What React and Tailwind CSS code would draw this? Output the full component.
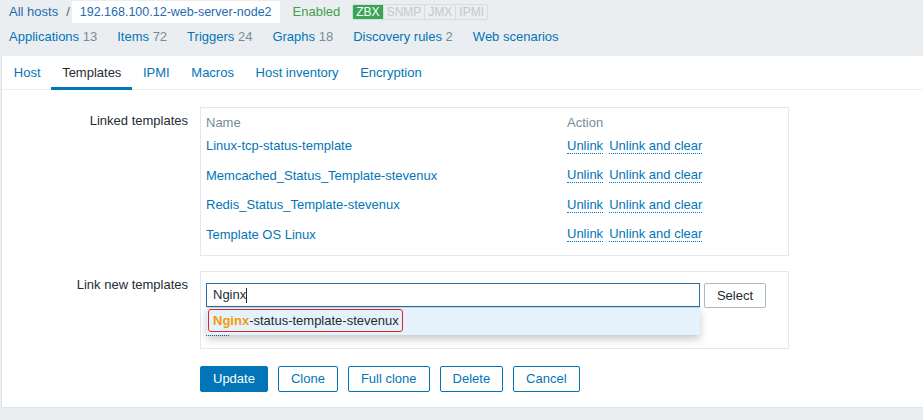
import React from "react";

const font = { fontFamily: '"Liberation Sans", Arial, sans-serif' };

const counts = [
  ["Applications", "13"],
  ["Items", "72"],
  ["Triggers", "24"],
  ["Graphs", "18"],
  ["Discovery rules", "2"],
  ["Web scenarios", ""],
];

const tabs = ["Host", "Templates", "IPMI", "Macros", "Host inventory", "Encryption"];

const linked = [
  "Linux-tcp-status-template",
  "Memcached_Status_Template-stevenux",
  "Redis_Status_Template-stevenux",
  "Template OS Linux",
];

function Btn({ children, primary }) {
  return (
    <button
      className={
        primary
          ? "h-[26px] px-[12px] rounded-[2px] border border-[#0275b8] bg-[#0275b8] text-white"
          : "h-[26px] px-[12px] rounded-[2px] border border-[#0275b8] bg-white text-[#0275b8]"
      }
    >
      {children}
    </button>
  );
}

export default function App() {
  return (
    <div style={font} className="w-[923px] h-[420px] bg-[#ebeef0] text-[13px] text-[#1f2c33] overflow-hidden">
      {/* breadcrumbs */}
      <div className="flex items-center h-[24px] pl-[9px]">
        <span className="text-[#1f6bb0]">All hosts</span>
        <span className="ml-[8px] text-[#4f5f68]">/</span>
        <span className="ml-[2px] h-[22px] flex items-center px-[8px] bg-white text-[12.5px] text-[#1f6bb0]">
          192.168.100.12-web-server-node2
        </span>
        <span className="ml-[13px] text-[#429e47]">Enabled</span>
        <div className="ml-[12px] flex h-[16px] text-[12px] leading-[14px] rounded-[2px] overflow-hidden border border-[#d8dcdf]">
          <span className="px-[3px] bg-[#3aa458] text-white">ZBX</span>
          <span className="px-[3px] text-[#c3c9cd] border-l border-[#d8dcdf]">SNMP</span>
          <span className="px-[3px] text-[#c3c9cd] border-l border-[#d8dcdf]">JMX</span>
          <span className="px-[3px] text-[#c3c9cd] border-l border-[#d8dcdf]">IPMI</span>
        </div>
      </div>

      {/* host counters */}
      <div className="flex items-center h-[26px] pl-[9px] gap-x-[20px] mb-[6px]">
        {counts.map(([label, n]) => (
          <span key={label}>
            <span className="text-[#0275b8]">{label}</span>
            {n && <span className="text-[#768d99]"> {n}</span>}
          </span>
        ))}
      </div>

      {/* main panel */}
      <div className="ml-[1px] bg-white border-l border-b border-[#dfe4e7] h-[352px]">
        <div className="flex h-[34px] pl-[1px] border-b border-[#ebeef0]">
          {tabs.map((t) => (
            <div key={t} className="relative flex items-center px-[10.8px]">
              <span className={t === "Templates" ? "text-[#1f2c33]" : "text-[#0275b8]"}>{t}</span>
              {t === "Templates" && (
                <div className="absolute left-0 right-0 bottom-[-1px] h-[3px] bg-[#0275b8]" />
              )}
            </div>
          ))}
        </div>

        <div className="pt-[17px]">
          {/* linked templates */}
          <div className="flex">
            <div className="w-[186px] text-right pt-[5px] leading-[17px]">Linked templates</div>
            <div className="ml-[12px] w-[589px] border border-[#e5e9eb] px-[5px] pt-[6px] pb-[6px]">
              <div className="grid grid-cols-[361px_1fr] h-[17px] leading-[17px] text-[#768d99]">
                <span>Name</span>
                <span>Action</span>
              </div>
              {linked.map((name) => (
                <div key={name} className="grid grid-cols-[361px_1fr] h-[29.5px] items-center">
                  <span className="text-[#0275b8]">{name}</span>
                  <span className="flex gap-[6px] text-[#0275b8] leading-[15px]">
                    <span className="border-b border-dotted border-[#0275b8]">Unlink</span>
                    <span className="border-b border-dotted border-[#0275b8]">Unlink and clear</span>
                  </span>
                </div>
              ))}
            </div>
          </div>

          {/* link new templates */}
          <div className="flex mt-[15px]">
            <div className="w-[186px] text-right pt-[5px] leading-[17px]">Link new templates</div>
            <div className="ml-[12px] w-[589px] border border-[#e5e9eb] pl-[5px] pt-[11px] pb-[12px]">
              <div className="flex items-start">
                <div className="relative w-[494px] h-[24px] border border-[#2a6eaa] flex items-center pl-[6px]">
                  <span>Nginx</span>
                  <span className="w-[1px] h-[15px] bg-[#1f2c33]" />
                  <div className="absolute left-0 top-[23px] w-[493px] h-[28px] bg-[#e6f2fb] border-t border-[#c9d4da] shadow-[0_4px_8px_rgba(0,0,0,0.22)] z-10">
                    <div className="ml-[1px] mt-[1px] w-[195px] h-[23px] border border-[#e3231e] rounded-[3px] flex items-center pl-[4px]">
                      <span className="font-bold text-[#f29a0c]">Nginx</span>
                      <span>-status-template-stevenux</span>
                    </div>
                  </div>
                </div>
                <button className="ml-[4px] w-[62px] h-[25px] border border-[#acbbc2] rounded-[2px] bg-white text-[#1f2c33]">
                  Select
                </button>
              </div>
              <div className="mt-[27px] w-[23px] border-b border-dotted border-[#0275b8]" />
            </div>
          </div>

          {/* buttons */}
          <div className="flex gap-[10px] mt-[17px] ml-[198px]">
            <Btn primary>Update</Btn>
            <Btn>Clone</Btn>
            <Btn>Full clone</Btn>
            <Btn>Delete</Btn>
            <Btn>Cancel</Btn>
          </div>
        </div>
      </div>
    </div>
  );
}
